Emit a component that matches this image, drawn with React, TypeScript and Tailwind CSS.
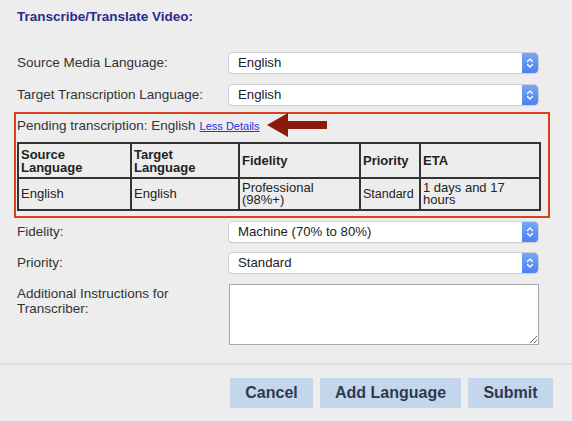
import React from 'react';

function Stepper() {
  return (
    <div className="flex h-full w-[16px] items-center justify-center rounded-r-[4px] bg-gradient-to-b from-[#79a6f7] to-[#4d7ff1]">
      <svg width="8" height="12" viewBox="0 0 8 12" fill="none">
        <path d="M1.5 4.5 L4 2 L6.5 4.5" stroke="white" strokeWidth="1.3" strokeLinecap="round" strokeLinejoin="round" />
        <path d="M1.5 7.5 L4 10 L6.5 7.5" stroke="white" strokeWidth="1.3" strokeLinecap="round" strokeLinejoin="round" />
      </svg>
    </div>
  );
}

function Select({ value }: { value: string }) {
  return (
    <div className="flex h-[20px] w-[309px] items-center rounded-[4px] bg-white shadow-[0_0_0_1px_#d0d0d0,0_1px_1px_#c0c0c0]">
      <span className="flex-1 pl-[9px] text-[13.2px] leading-none text-[#222]">{value}</span>
      <Stepper />
    </div>
  );
}

function Row({ label, value, className }: { label: string; value: string; className?: string }) {
  return (
    <div className={'flex h-[20px] items-center ' + (className ?? '')}>
      <div className="w-[212px] text-[13.5px] leading-[20px] text-[#333]">{label}</div>
      <Select value={value} />
    </div>
  );
}

const th = 'border-2 border-[#333] px-[2px] text-left align-middle font-bold leading-[13px]';
const td = 'border-2 border-[#333] px-[2px] text-left align-middle leading-[12px]';

export default function App() {
  return (
    <div className="h-[421px] w-[572px] bg-[#ededed] font-['Liberation_Sans',Arial,sans-serif] text-[#333]">
      <div className="px-[17px] pt-[9px] text-[13.5px] font-bold leading-[16px] text-[#2b2b8c]">
        Transcribe/Translate Video:
      </div>

      <div className="px-[17px]">
        <Row label="Source Media Language:" value="English" className="mt-[28px]" />
        <Row label="Target Transcription Language:" value="English" className="mt-[12px]" />
      </div>

      <div className="mx-[14px] mt-[7px] h-[106px] w-[536px] border-2 border-[#d8411d]">
        <div className="relative flex h-[24px] items-center pl-[1px] text-[13.5px]">
          <span>Pending transcription: English</span>
          <span className="ml-[4px] text-[11px] text-[#2233dd] underline">Less Details</span>
          <svg className="absolute left-[251px] top-[-1px]" width="62" height="26" viewBox="0 0 62 26">
            <path d="M0 12 L21 0 L21 8 L60 8 L60 16 L21 16 L21 24 Z" fill="#8b1a0c" />
          </svg>
        </div>
        <table className="ml-[1px] mt-[4px] w-[522px] table-fixed border-collapse text-[13px] text-[#222]">
          <colgroup>
            <col className="w-[113px]" />
            <col className="w-[108px]" />
            <col className="w-[121px]" />
            <col className="w-[60px]" />
            <col className="w-[120px]" />
          </colgroup>
          <thead>
            <tr className="h-[35px]">
              <th className={th}>Source Language</th>
              <th className={th}>Target Language</th>
              <th className={th}>Fidelity</th>
              <th className={th}>Priority</th>
              <th className={th}>ETA</th>
            </tr>
          </thead>
          <tbody>
            <tr className="h-[32px]">
              <td className={td}>English</td>
              <td className={td}>English</td>
              <td className={td}>Professional (98%+)</td>
              <td className={td + ' px-[1px] text-[12.5px]'}>Standard</td>
              <td className={td}>1 days and 17 hours</td>
            </tr>
          </tbody>
        </table>
      </div>

      <div className="px-[17px]">
        <Row label="Fidelity:" value="Machine (70% to 80%)" className="mt-[4px]" />
        <Row label="Priority:" value="Standard" className="mt-[11px]" />
        <div className="mt-[11px] flex">
          <div className="w-[212px] pt-[2px] text-[13.5px] leading-[15px] text-[#333]">
            Additional Instructions for
            <br />
            Transcriber:
          </div>
          <textarea className="h-[61px] w-[310px] border border-[#a8a8a8] bg-white" />
        </div>
      </div>

      <div className="mt-[18px] h-[2px] w-full bg-[#dedede]" />

      <div className="mt-[13px] flex justify-end gap-[7px] pr-[19px]">
        <button className="h-[30px] w-[83px] bg-[#c4d6eb] text-[16px] font-bold text-[#2e3a4e]">Cancel</button>
        <button className="h-[30px] w-[141px] bg-[#c4d6eb] text-[16px] font-bold text-[#2e3a4e]">Add Language</button>
        <button className="h-[30px] w-[85px] bg-[#c4d6eb] text-[16px] font-bold text-[#2e3a4e]">Submit</button>
      </div>
    </div>
  );
}
